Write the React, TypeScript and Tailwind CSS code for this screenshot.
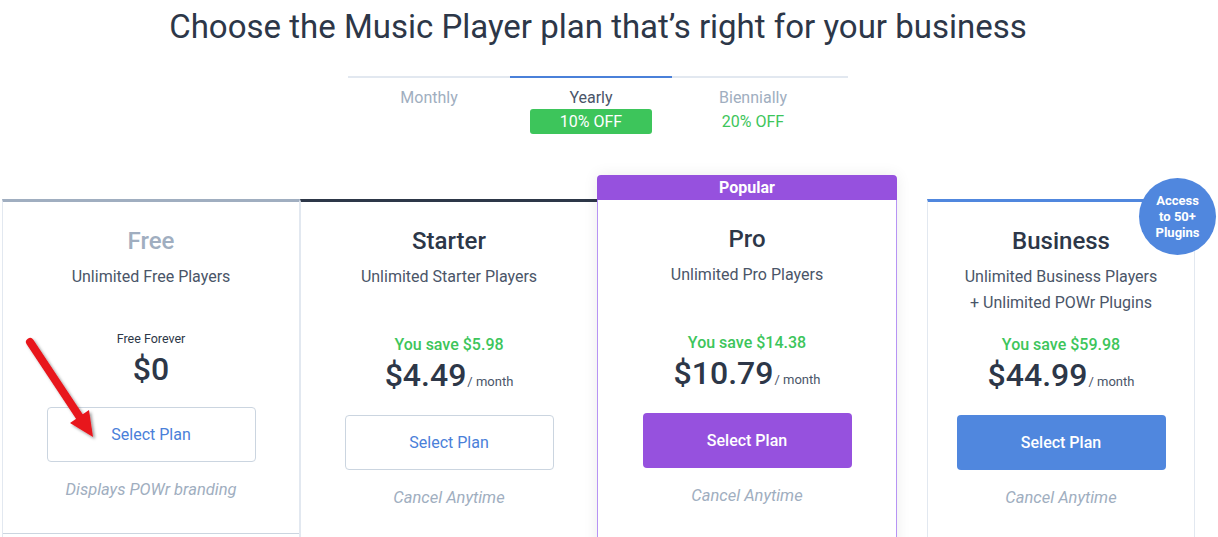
import React from "react";

type Plan = {
  name: string;
  lines: string[];
  kind: "free" | "starter" | "pro" | "business";
  save?: string;
  price: string;
  note: string;
};

const plans: Plan[] = [
  {
    name: "Free",
    lines: ["Unlimited Free Players"],
    kind: "free",
    price: "$0",
    note: "Displays POWr branding",
  },
  {
    name: "Starter",
    lines: ["Unlimited Starter Players"],
    kind: "starter",
    save: "You save $5.98",
    price: "$4.49",
    note: "Cancel Anytime",
  },
  {
    name: "Pro",
    lines: ["Unlimited Pro Players"],
    kind: "pro",
    save: "You save $14.38",
    price: "$10.79",
    note: "Cancel Anytime",
  },
  {
    name: "Business",
    lines: ["Unlimited Business Players", "+ Unlimited POWr Plugins"],
    kind: "business",
    save: "You save $59.98",
    price: "$44.99",
    note: "Cancel Anytime",
  },
];

const outlineBtn =
  "mx-auto flex h-[55px] w-[209px] items-center justify-center rounded-[4px] border border-[#cbd5e0] bg-white text-[16px] text-[#4a80d9]";

const PlanBody = ({ plan }: { plan: Plan }) => {
  const isFree = plan.kind === "free";
  return (
    <div className="flex flex-col items-center pt-[23px] text-center">
      <h2
        className={`text-[24px] leading-[32px] font-medium ${
          isFree ? "text-[#a0aec0]" : "text-[#2d3748]"
        }`}
      >
        {plan.name}
      </h2>
      <div className="mt-[7px] h-[52px] text-[16px] leading-[26px] text-[#4a5568]">
        {plan.lines.map((l) => (
          <div key={l}>{l}</div>
        ))}
      </div>
      {isFree ? (
        <>
          <div className="mt-[15px] text-[12.5px] leading-[16px] text-[#2d3748]">
            Free Forever
          </div>
          <div className="mt-[2px] text-[32px] leading-[40px] font-medium text-[#2d3748]">
            {plan.price}
          </div>
        </>
      ) : (
        <>
          <div className="mt-[19px] text-[16px] leading-[20px] font-medium text-[#3dc55b]">
            {plan.save}
          </div>
          <div className="flex items-baseline text-[#2d3748]">
            <span className="text-[32px] leading-[40px] font-medium">
              {plan.price}
            </span>
            <span className="ml-[1px] text-[13px] text-[#4a5568]">/ month</span>
          </div>
        </>
      )}
      <div className={`w-full ${isFree ? "mt-[18px]" : "mt-[20px]"}`}>
        {plan.kind === "pro" ? (
          <button className="mx-auto flex h-[55px] w-[209px] items-center justify-center rounded-[4px] bg-[#9651de] text-[16px] font-medium text-white">
            Select Plan
          </button>
        ) : plan.kind === "business" ? (
          <button className="mx-auto flex h-[55px] w-[209px] items-center justify-center rounded-[4px] bg-[#5087de] text-[16px] font-medium text-white">
            Select Plan
          </button>
        ) : (
          <button className={outlineBtn}>Select Plan</button>
        )}
      </div>
      <div className="mt-[15px] text-[16.5px] leading-[25px] text-[#a0aec0] italic">
        {plan.note}
      </div>
      {isFree && (
        <div className="mt-[31px] h-[1px] w-full bg-[#cbd5e0]" />
      )}
    </div>
  );
};

const Arrow = () => (
  <svg
    className="absolute left-[20px] top-[330px]"
    width="90"
    height="115"
    viewBox="0 0 90 115"
  >
    <defs>
      <filter id="sh" x="-30%" y="-30%" width="160%" height="160%">
        <feDropShadow dx="2" dy="2" stdDeviation="1.5" floodColor="#000" floodOpacity="0.4" />
      </filter>
    </defs>
    <g filter="url(#sh)">
      <line x1="10" y1="12" x2="61" y2="89" stroke="#e8141b" strokeWidth="8" strokeLinecap="round" />
      <polygon points="73,107 69,80 50,93" fill="#e8141b" />
    </g>
  </svg>
);

export default function App() {
  const [free, starter, pro, business] = plans;
  return (
    <div
      className="relative h-[537px] w-[1218px] overflow-hidden bg-white"
      style={{ fontFamily: "Roboto, 'Noto Sans', Arial, sans-serif" }}
    >
      <div className="w-[1196px]">
        <h1 className="pt-[7px] text-center text-[33px] leading-[40px] font-normal text-[#2d3748]">
          Choose the Music Player plan that’s right for your business
        </h1>

        <div className="mx-auto mt-[29px] flex w-[500px] border-t-2 border-[#e2e8f0]">
          <div className="-mt-[2px] w-[162px] border-t-2 border-transparent pt-[8px] text-center text-[16px] leading-[24px] text-[#a0aec0]">
            Monthly
          </div>
          <div className="-mt-[2px] flex w-[162px] flex-col items-center border-t-2 border-[#4a80d9] pt-[8px] text-[16px] leading-[24px] text-[#4a5568]">
            <span>Yearly</span>
            <span className="-mt-[1px] h-[25px] w-[122px] rounded-[3px] bg-[#3dc55b] text-center leading-[25px] text-white">
              10% OFF
            </span>
          </div>
          <div className="-mt-[2px] flex w-[162px] flex-col items-center border-t-2 border-transparent pt-[8px] text-[16px] leading-[24px] text-[#a0aec0]">
            <span>Biennially</span>
            <span className="-mt-[1px] leading-[25px] text-[#3dc55b]">20% OFF</span>
          </div>
        </div>

        <div className="mt-[41px] flex items-start">
          <div className="ml-[2px] mt-[24px] h-[400px] w-[298px] border-x border-t-[3px] border-x-[#e2e8f0] border-t-[#a0aec0]">
            <PlanBody plan={free} />
          </div>
          <div className="mt-[24px] h-[400px] w-[298px] border-x border-t-[3px] border-x-[#e2e8f0] border-t-[#2d3748]">
            <PlanBody plan={starter} />
          </div>
          <div className="relative z-10 -ml-[1px] w-[300px] shadow-[0_0_14px_rgba(0,0,0,0.08)]">
            <div className="h-[25px] rounded-t-[4px] bg-[#9651de] text-center text-[16px] leading-[25px] font-bold text-white">
              Popular
            </div>
            <div className="h-[400px] border-x border-[#b794f4] bg-white">
              <PlanBody plan={pro} />
            </div>
          </div>
          <div className="relative ml-[30px] mt-[24px] h-[400px] w-[268px] border-x border-t-[3px] border-x-[#e2e8f0] border-t-[#5087de]">
            <PlanBody plan={business} />
            <div className="absolute -top-[24px] left-[211px] flex h-[77px] w-[77px] items-center justify-center rounded-full bg-[#5087de] text-center text-[13px] leading-[16px] font-bold text-white">
              Access
              <br />
              to 50+
              <br />
              Plugins
            </div>
          </div>
        </div>
      </div>
      <Arrow />
    </div>
  );
}
